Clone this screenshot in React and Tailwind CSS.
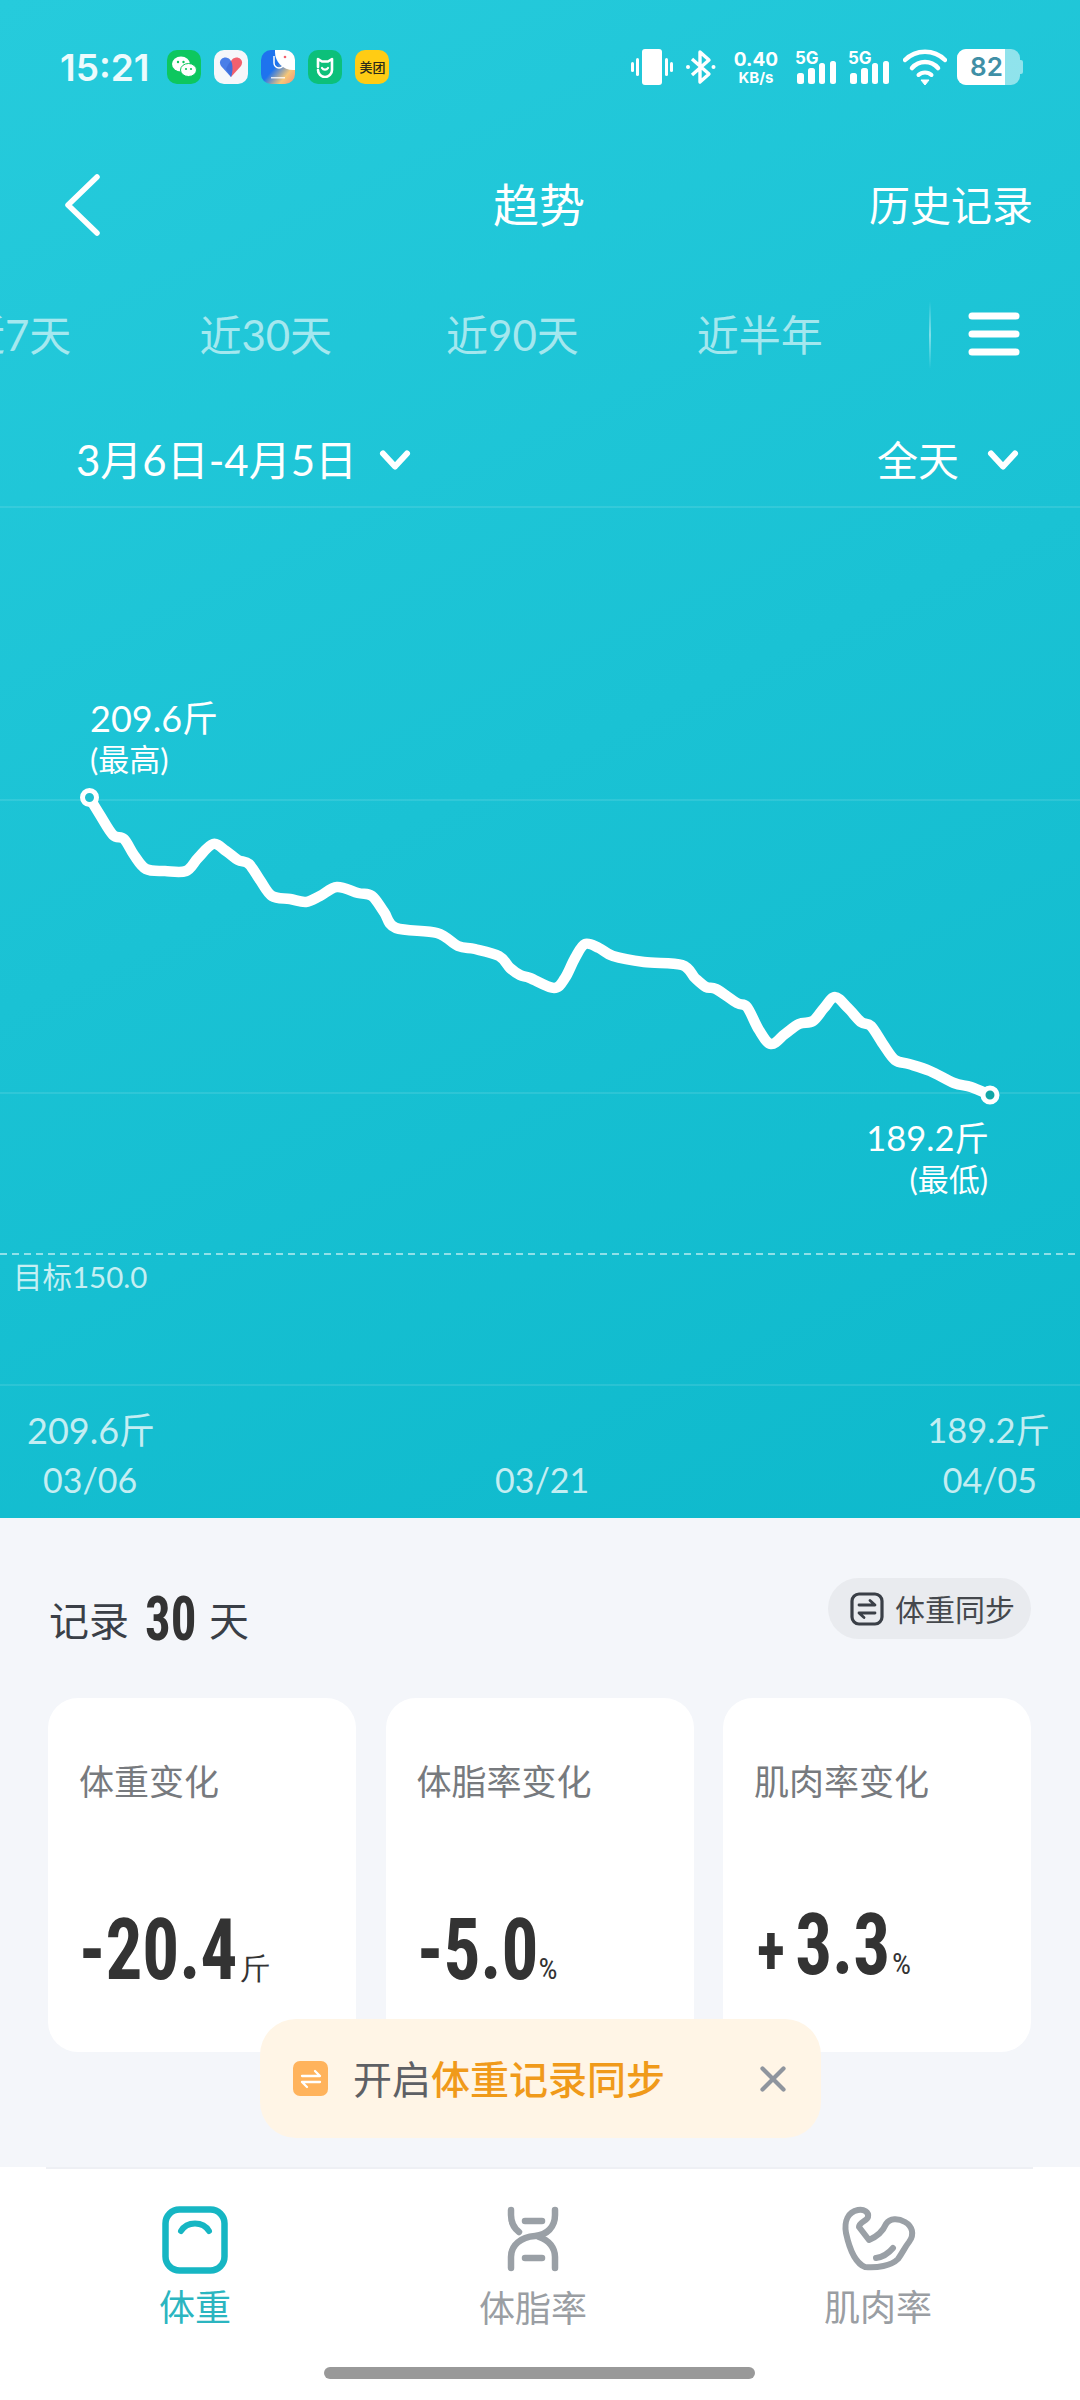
import React from "react";

const FONT = { fontFamily: 'Lato, "Noto Sans CJK SC", sans-serif' };

// weight curve, in page coordinates
const POINTS = [
    [89, 797], [100, 815], [113, 835], [124, 839], [134, 855], [146, 869], [165, 871], [186, 871],
    [198, 858], [213, 844], [226, 851], [238, 860], [249, 864], [260, 880], [272, 896], [290, 899],
    [306, 902], [320, 896], [337, 887], [358, 893], [372, 896], [384, 912], [396, 928], [437, 933],
    [458, 946], [475, 949], [499, 956], [510, 968], [520, 975], [530, 978], [554, 988], [565, 978],
    [575, 958], [585, 944], [599, 948], [613, 956], [644, 962], [682, 965], [695, 978], [706, 987],
    [716, 989], [737, 1003], [747, 1007], [759, 1030], [771, 1044], [785, 1034], [799, 1024], [813, 1021],
    [824, 1008], [835, 997], [848, 1008], [861, 1022], [871, 1026], [883, 1044], [895, 1060], [909, 1064],
    [930, 1071], [954, 1083], [971, 1087], [990, 1095],
];

const buildPath = (pts) => {
    let d = `M${pts[0][0]} ${pts[0][1]}`;
    for (let i = 0; i < pts.length - 1; i++) {
        const p0 = pts[i - 1] || pts[i];
        const p1 = pts[i];
        const p2 = pts[i + 1];
        const p3 = pts[i + 2] || p2;
        const c1x = p1[0] + (p2[0] - p0[0]) / 6;
        const c1y = p1[1] + (p2[1] - p0[1]) / 6;
        const c2x = p2[0] - (p3[0] - p1[0]) / 6;
        const c2y = p2[1] - (p3[1] - p1[1]) / 6;
        d += ` C${c1x} ${c1y} ${c2x} ${c2y} ${p2[0]} ${p2[1]}`;
    }
    return d;
};

const Chevron = ({ className }) => (
    <svg className={className} width="32" height="20" viewBox="0 0 32 20" fill="none">
        <path d="M4 3.5 L16 16.5 L28 3.5" stroke="white" strokeWidth="6" strokeLinecap="round" strokeLinejoin="round" />
    </svg>
);

const Signal = () => (
    <div className="relative w-[41px] h-[36px]">
        <span className="absolute left-[-1px] top-[1px] text-[17px] leading-none font-bold text-white" style={{ fontFamily: 'Inter, sans-serif' }}>5G</span>
        <svg className="absolute left-0 top-0" width="41" height="36" viewBox="0 0 41 36" fill="white">
            <rect x="1" y="24" width="7" height="11" rx="2.5" />
            <rect x="12" y="19" width="7" height="16" rx="2.5" />
            <rect x="23" y="14" width="6" height="21" rx="2.5" />
            <rect x="34" y="12" width="6" height="23" rx="2.5" />
        </svg>
    </div>
);

const AppIcons = () => (
    <div className="flex items-center gap-[13px] ml-[18px]">
        <div className="w-[34px] h-[34px] rounded-[10px] bg-[#0dc75f] flex items-center justify-center">
            <svg width="26" height="24" viewBox="0 0 26 24">
                <ellipse cx="10" cy="9" rx="9" ry="7.5" fill="white" />
                <ellipse cx="17.5" cy="15" rx="8" ry="6.5" fill="white" stroke="#0dc75f" strokeWidth="1" />
                <circle cx="7" cy="7" r="1.2" fill="#0dc75f" />
                <circle cx="12.5" cy="7" r="1.2" fill="#0dc75f" />
                <circle cx="15" cy="14" r="1.1" fill="#0dc75f" />
                <circle cx="20" cy="14" r="1.1" fill="#0dc75f" />
            </svg>
        </div>
        <div className="w-[34px] h-[34px] rounded-[10px] bg-[#f6f7fa] flex items-center justify-center">
            <svg width="24" height="22" viewBox="0 0 24 22">
                <path d="M12 21 L2 10 C-1 5 3 1 7 1.5 C9 1.8 11 3 12 5 Z" fill="#4a7ee8" />
                <path d="M12 21 L22 10 C25 5 21 1 17 1.5 C15 1.8 13 3 12 5 Z" fill="#f2606e" />
                <path d="M12 21 L7 13 C9 8 11 6 12 5 C14 8 14 16 12 21 Z" fill="#3f6fdc" />
            </svg>
        </div>
        <div className="w-[34px] h-[34px] rounded-[10px] bg-[linear-gradient(130deg,#1e73ee_45%,#f7c777_75%,#f0907a)] relative overflow-hidden">
            <div className="absolute right-0 top-0 w-[20px] h-[20px] rounded-bl-[18px] bg-white"></div>
            <svg className="absolute left-0 top-0" width="34" height="34" viewBox="0 0 34 34" fill="none">
                <path d="M13 6 V13 A5 5 0 0 0 23 13" stroke="white" strokeWidth="1.5" />
                <circle cx="24" cy="7" r="1.3" fill="#f2606e" />
                <rect x="10" y="27" width="14" height="1.5" fill="white" opacity="0.8" />
            </svg>
        </div>
        <div className="w-[34px] h-[34px] rounded-[10px] bg-[#0cc07a] flex items-center justify-center">
            <svg width="22" height="22" viewBox="0 0 22 22" fill="none">
                <path d="M4 11 V3 L8 5.5 H14 L18 3 V14 A7 7 0 0 1 4 14" stroke="white" strokeWidth="2.6" strokeLinejoin="round" strokeLinecap="round" />
                <path d="M8 12 A3.5 3.5 0 0 0 14 12" stroke="white" strokeWidth="2.2" strokeLinecap="round" />
            </svg>
        </div>
        <div className="w-[34px] h-[34px] rounded-[10px] bg-[#ffcc14] flex items-center justify-center text-[13px] leading-none font-medium text-[#2b2b1a] whitespace-nowrap">
            美团
        </div>
    </div>
);

const StatusBar = () => (
    <div className="h-[134px] flex items-center pl-[60px] pr-[60px] shrink-0">
        <span className="text-[37px] font-semibold leading-none text-[#ecfbfd]" style={{ fontFamily: 'Inter, sans-serif' }}>15:21</span>
        <AppIcons />
        <div className="ml-auto flex items-center">
            <svg width="44" height="36" viewBox="0 0 44 36" fill="white">
                <rect x="12" y="0" width="20" height="36" rx="3" />
                <rect x="6" y="9" width="3" height="18" rx="1.5" />
                <rect x="1" y="13" width="3" height="10" rx="1.5" />
                <rect x="35" y="9" width="3" height="18" rx="1.5" />
                <rect x="40" y="13" width="3" height="10" rx="1.5" />
            </svg>
            <svg className="ml-[12px]" width="30" height="36" viewBox="0 0 30 36" fill="none">
                <path d="M6 10 L23 25 L14 33 V3 L23 11 L6 26" stroke="white" strokeWidth="3.4" strokeLinejoin="round" />
                <circle cx="2" cy="18" r="2" fill="white" />
                <circle cx="27.5" cy="18" r="2" fill="white" />
            </svg>
            <div className="ml-[17px] w-[46px] flex flex-col items-center text-white font-bold" style={{ fontFamily: 'Inter, sans-serif' }}>
                <span className="text-[19px] leading-[21px]">0.40</span>
                <span className="text-[15px] leading-[16px]">KB/s</span>
            </div>
            <div className="ml-[17px]"><Signal /></div>
            <div className="ml-[12px]"><Signal /></div>
            <svg className="ml-[13px]" width="44" height="38" viewBox="0 0 44 38" fill="none">
                <path d="M2 12 C13 1 31 1 42 12" stroke="white" strokeWidth="4.5" strokeLinecap="round" />
                <path d="M9 20 C16 12 28 12 35 20" stroke="white" strokeWidth="4.5" strokeLinecap="round" />
                <path d="M15.5 27 C19 23.5 25 23.5 28.5 27" stroke="white" strokeWidth="4" strokeLinecap="round" />
                <path d="M18 32 H26 L22 37 Z" fill="white" stroke="white" strokeLinejoin="round" />
            </svg>
            <div className="ml-[10px] relative w-[63px] h-[36px] rounded-[9px] bg-white/50 flex">
                <div className="w-[48px] h-full bg-white rounded-l-[9px]"></div>
                <span className="absolute left-[13px] top-0 h-full flex items-center text-[26px] font-semibold leading-none text-[#3f8fa6]" style={{ fontFamily: 'Inter, sans-serif' }}>82</span>
                <div className="absolute right-[-3px] top-[11px] w-[3px] h-[14px] bg-white/50 rounded-r-[2px]"></div>
            </div>
        </div>
    </div>
);

const NavBar = () => (
    <div className="h-[142px] flex items-center relative pl-[62px] pr-[47px] shrink-0 text-white">
        <svg width="40" height="64" viewBox="0 0 40 64" fill="none">
            <path d="M35 4 L6 32 L35 60" stroke="white" strokeWidth="5.5" strokeLinecap="round" strokeLinejoin="round" />
        </svg>
        <span className="absolute left-[493px] text-[46px] leading-none">趋势</span>
        <span className="ml-auto text-[41px] leading-none">历史记录</span>
    </div>
);

const Tabs = () => (
    <div className="h-[118px] flex items-center shrink-0 overflow-hidden text-[42px] leading-none text-white/60 whitespace-nowrap">
        <span className="ml-[-37px]">近7天</span>
        <span className="ml-[128px]">近30天</span>
        <span className="ml-[114px]">近90天</span>
        <span className="ml-[118px]">近半年</span>
        <div className="ml-auto mr-[149px] w-[2px] h-[68px] bg-[linear-gradient(180deg,transparent,rgba(255,255,255,0.45),transparent)]"></div>
        <svg className="absolute left-[968px]" width="52" height="46" viewBox="0 0 52 46" stroke="white" strokeWidth="7" strokeLinecap="round">
            <path d="M4 4 H48" />
            <path d="M4 22 H48" />
            <path d="M4 40 H48" />
        </svg>
    </div>
);

const DateRow = () => (
    <div className="mt-[20px] h-[92px] flex items-center pl-[76px] pr-[61px] shrink-0 text-white text-[42px] leading-none">
        <span>3月6日-4月5日</span>
        <Chevron className="ml-[22px]" />
        <span className="ml-auto text-[41px]">全天</span>
        <Chevron className="ml-[28px]" />
    </div>
);

const Chart = () => (
    <div className="relative flex-1 text-white">
        <svg className="absolute left-0 top-0" width="1080" height="1012" viewBox="0 506 1080 1012" fill="none">
            {[507, 800, 1093, 1385].map(y => (
                <line key={y} x1="0" x2="1080" y1={y} y2={y} stroke="white" strokeOpacity="0.1" strokeWidth="2" />
            ))}
            <line x1="0" x2="1080" y1="1254" y2="1254" stroke="white" strokeOpacity="0.7" strokeWidth="1.5" strokeDasharray="7 5" />
            <path d={buildPath(POINTS)} stroke="white" strokeWidth="10.5" strokeLinecap="round" strokeLinejoin="round" />
            <circle cx="89.5" cy="797.5" r="7" fill="#1fbfd0" stroke="white" strokeWidth="5" />
            <circle cx="990" cy="1095" r="7" fill="#12a6a6" stroke="white" strokeWidth="5" />
        </svg>

        <span className="absolute left-[90px] top-[193px] text-[36px] leading-[38px]">209.6斤</span>
        <span className="absolute left-[90px] top-[238px] text-[31px] leading-[30px]">(最高)</span>
        <span className="absolute right-[91px] top-[613px] text-[34.5px] leading-[38px]">189.2斤</span>
        <span className="absolute right-[92px] top-[658px] text-[31px] leading-[30px]">(最低)</span>
        <span className="absolute left-[13px] top-[755px] text-[29.5px] leading-[32px] text-white/75">目标150.0</span>

        <span className="absolute left-[27px] top-[905px] text-[36px] leading-[38px] text-white/75">209.6斤</span>
        <span className="absolute right-[30px] top-[905px] text-[34.5px] leading-[38px] text-white/75">189.2斤</span>
        <span className="absolute left-[43px] top-[957px] text-[34px] leading-[34px] text-white/75">03/06</span>
        <span className="absolute left-[495px] top-[957px] text-[34px] leading-[34px] text-white/75">03/21</span>
        <span className="absolute right-[43px] top-[957px] text-[34px] leading-[34px] text-white/75">04/05</span>
    </div>
);

const SwapIcon = () => (
    <svg width="34" height="34" viewBox="0 0 34 34" fill="none">
        <rect x="2" y="2" width="30" height="30" rx="7" stroke="#3a3f47" strokeWidth="3.2" />
        <path d="M9 13 H25 L20 8.5" stroke="#3a3f47" strokeWidth="2.8" strokeLinecap="round" strokeLinejoin="round" />
        <path d="M25 21 H9 L14 25.5" stroke="#3a3f47" strokeWidth="2.8" strokeLinecap="round" strokeLinejoin="round" />
    </svg>
);

const NARROW = { fontFamily: '"Liberation Sans Narrow", "Roboto Condensed", Roboto, sans-serif' };

const StatCard = ({ label, sign, value, unit, signClass, widthClass }) => (
    <div className="w-[308px] h-[354px] rounded-[30px] bg-white relative">
        <div className="absolute left-[31px] top-[65px] text-[35px] leading-[36px] text-[#777a7e]">{label}</div>
        <div className="absolute left-[31px] bottom-[68px] flex items-baseline text-[#333] font-bold leading-none" style={NARROW}>
            <div className={widthClass}>
                <span className="inline-block origin-left scale-x-[0.86] text-[85px] leading-[66px] whitespace-nowrap">
                    <span className={signClass}>{sign}</span>{value}
                </span>
            </div>
            <span className="text-[30px] leading-none font-normal">{unit}</span>
        </div>
    </div>
);

const Toast = () => (
    <div className="absolute left-[260px] top-[2019px] w-[561px] h-[119px] rounded-[36px] bg-[#fff5e6] flex items-center pl-[33px]">
        <div className="w-[35px] h-[35px] rounded-[7px] bg-[#ffb35c] flex items-center justify-center">
            <svg width="22" height="22" viewBox="0 0 22 22" fill="none" stroke="white" strokeWidth="2.3" strokeLinecap="round" strokeLinejoin="round">
                <path d="M2 8 H20 L15 3" />
                <path d="M20 14 H2 L7 19" />
            </svg>
        </div>
        <span className="ml-[25px] mt-[2px] text-[39px] leading-none text-[#5e6064] whitespace-nowrap">开启<span className="text-[#f09a1a] font-medium">体重记录同步</span></span>
        <svg className="absolute left-[500px] top-[47px]" width="26" height="26" viewBox="0 0 26 26" fill="none" stroke="#8f959e" strokeWidth="4.2" strokeLinecap="round">
            <path d="M2.5 2.5 L23.5 23.5" />
            <path d="M23.5 2.5 L2.5 23.5" />
        </svg>
    </div>
);

const Summary = () => (
    <div className="h-[649px] bg-[#f4f6fa] pl-[48px] pr-[49px] shrink-0 relative">
        <div className="h-[180px] flex items-start justify-between text-[#3a3f47]">
            <div className="pl-[1px] pt-[78px] flex items-end leading-none">
                <span className="text-[40px] leading-[50px]">记录</span>
                <div className="ml-[16px] mb-[4px] w-[50px]">
                    <span className="inline-block origin-left scale-x-[0.82] text-[62px] leading-[44px] font-bold text-[#333]" style={NARROW}>30</span>
                </div>
                <span className="ml-[14px] text-[40px] leading-[50px]">天</span>
            </div>
            <div className="mt-[60px] w-[203px] h-[61px] rounded-full bg-[#e9ebef] flex items-center pl-[22px]">
                <SwapIcon />
                <span className="ml-[11px] text-[30px] leading-none text-[#45484d]">体重同步</span>
            </div>
        </div>
        <div className="flex justify-between">
            <StatCard label="体重变化" sign="-" value="20.4" unit="斤" widthClass="w-[161px]" />
            <StatCard label="体脂率变化" sign="-" value="5.0" unit="%" widthClass="w-[122px]" />
            <StatCard label="肌肉率变化" sign="+" value="3.3" unit="%" widthClass="w-[138px] pl-[3px]" signClass="text-[68px] mr-[12px]" />
        </div>
    </div>
);

const ScaleIcon = () => (
    <svg width="66" height="68" viewBox="0 0 66 68" fill="none" stroke="#16b6c3">
        <rect x="3.5" y="3.5" width="59" height="61" rx="14" strokeWidth="6.5" />
        <path d="M19 25 C25 15 41 15 47 25" strokeWidth="6" strokeLinecap="round" />
    </svg>
);

const DnaIcon = () => (
    <svg className="ml-[12px]" width="100" height="90" viewBox="0 0 100 90" fill="none" stroke="#9aa0a6" strokeWidth="6.5" strokeLinecap="round">
        <path d="M22 15 V20 C22 28 25 33 30 37" />
        <path d="M66 15 V20 C66 32 58 40 46 41 C32 42 22 50 22 62 V73" />
        <path d="M50 42 C60 45 66 53 66 62 V73" />
        <path d="M36 26 H53" />
        <path d="M36 63 H53" />
    </svg>
);

const MuscleIcon = () => (
    <svg className="ml-[6px]" width="100" height="90" viewBox="0 0 100 90" fill="none" stroke="#9aa0a6" strokeWidth="6" strokeLinecap="round" strokeLinejoin="round">
        <path d="M34 72 C24 68 18 52 15 38 C13 26 17 17 27 15 C33 14 38 17 37 22 C36 26 28 27 28 32 L38 45 C45 42 52 36 55 29 C59 23 67 23 74 27 C81 31 84 39 78 47 C74 52 72 57 67 64 C60 71 46 73 34 72 Z" />
        <path d="M45 63 C52 62 57 59 62 53" />
    </svg>
);

const BottomNav = () => (
    <div className="flex-1 relative bg-white">
        <div className="absolute left-[46px] right-[47px] top-0 h-[2px] bg-[#eef0f4]"></div>
        <div className="grid grid-cols-[390px_286px_404px] pt-[38px] text-[36px] leading-none text-[#9a9ea3]">
            <div className="flex flex-col items-center">
                <div className="h-[69px] flex items-center"><ScaleIcon /></div>
                <span className="mt-[15px] text-[#2bb5c0]">体重</span>
            </div>
            <div className="flex flex-col items-center">
                <div className="h-[69px] flex items-center"><DnaIcon /></div>
                <span className="mt-[16px]">体脂率</span>
            </div>
            <div className="flex flex-col items-center">
                <div className="h-[69px] flex items-center"><MuscleIcon /></div>
                <span className="mt-[15px]">肌肉率</span>
            </div>
        </div>
        <div className="absolute left-[324px] top-[200px] w-[431px] h-[12px] rounded-full bg-[#999]"></div>
    </div>
);

const App = () => {
    return (
        <div className="relative w-[1080px] h-[2400px] flex flex-col overflow-hidden" style={FONT}>
            <div className="h-[1518px] shrink-0 flex flex-col bg-[linear-gradient(155deg,#26cbdc,#0eb9cc)]">
                <StatusBar />
                <NavBar />
                <Tabs />
                <DateRow />
                <Chart />
            </div>
            <Summary />
            <BottomNav />
            <Toast />
        </div>
    );
};

export default App;
